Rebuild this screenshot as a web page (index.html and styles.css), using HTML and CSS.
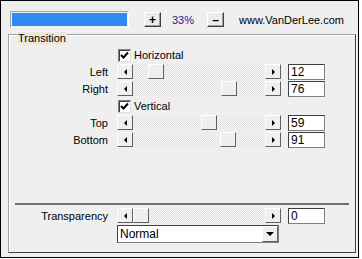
FILE: index.html
```html
<!DOCTYPE html>
<html>
<head>
<meta charset="utf-8">
<link rel="stylesheet" href="styles.css">
</head>
<body>
<div class="frame">
  <div class="top">
    <div class="progress"><div class="fill"></div></div>
    <div class="btn plus">+</div>
    <span class="pct">33%</span>
    <div class="btn minus">–</div>
    <span class="url">www.VanDerLee.com</span>
  </div>
  <div class="group">
    <span class="legend">Transition</span>
    <div class="check"><span class="box"><svg width="9" height="9" viewBox="0 0 9 9"><path d="M1 4 L3.5 6.5 L8 1.5" fill="none" stroke="#000" stroke-width="2"/></svg></span>Horizontal</div>
    <div class="row"><span class="lbl">Left</span><div class="slider"><div class="arr"><i class="tl"></i></div><div class="track"><div class="thumb" style="margin-left:15px"></div></div><div class="arr"><i class="tr"></i></div></div><div class="num">12</div></div>
    <div class="row"><span class="lbl">Right</span><div class="slider"><div class="arr"><i class="tl"></i></div><div class="track"><div class="thumb" style="margin-left:88px"></div></div><div class="arr"><i class="tr"></i></div></div><div class="num">76</div></div>
    <div class="check"><span class="box"><svg width="9" height="9" viewBox="0 0 9 9"><path d="M1 4 L3.5 6.5 L8 1.5" fill="none" stroke="#000" stroke-width="2"/></svg></span>Vertical</div>
    <div class="row"><span class="lbl">Top</span><div class="slider"><div class="arr"><i class="tl"></i></div><div class="track"><div class="thumb" style="margin-left:68px"></div></div><div class="arr"><i class="tr"></i></div></div><div class="num">59</div></div>
    <div class="row"><span class="lbl">Bottom</span><div class="slider"><div class="arr"><i class="tl"></i></div><div class="track"><div class="thumb" style="margin-left:87px"></div></div><div class="arr"><i class="tr"></i></div></div><div class="num">91</div></div>
    <div class="sep"></div>
    <div class="row"><span class="lbl">Transparency</span><div class="slider"><div class="arr"><i class="tl"></i></div><div class="track"><div class="thumb" style="margin-left:0"></div></div><div class="arr"><i class="tr"></i></div></div><div class="num">0</div></div>
    <div class="row sel-row"><span class="lbl"></span><div class="select"><span class="sel-text">Normal</span><div class="arr drop"><i class="td"></i></div></div></div>
  </div>
</div>
</body>
</html>
```

FILE: styles.css
```css
* { box-sizing: border-box; }
html, body { margin: 0; padding: 0; background: #ffffff; }
body { font-family: "Liberation Sans", Arial, sans-serif; font-size: 11px; color: #000; }
.frame {
  width: 359px; height: 258px;
  border: 1px solid #000;
  background: #efefef;
  padding: 10px 0 0 6px;
  display: flex; flex-direction: column;
}
.top { display: flex; align-items: center; height: 17px; }
.progress {
  width: 119px; height: 17px;
  border: 1px solid; border-color: #a0a0a0 #fff #fff #a0a0a0;
  padding: 1px;
  margin-left: 3px;
}
.fill { width: 100%; height: 100%; background: #2e8cf0; }
.btn {
  width: 17px; height: 15px;
  background: #ececec;
  border: 1px solid; border-color: #fff #404040 #404040 #fff;
  box-shadow: inset -1px -1px 0 #a0a0a0;
  display: flex; align-items: center; justify-content: center;
  font-weight: bold; font-size: 12px; line-height: 1;
}
.plus { margin-left: 15px; }
.pct { margin-left: 11px; color: #20208f; width: 35px; font-size: 11px; }
.minus { margin-left: 0; }
.url { margin-left: 15px; }
.group {
  position: relative;
  margin-top: 6px;
  width: 348px; height: 219px;
  margin-left: 1px;
  border: 1px solid; border-color: #a0a0a0 #404040 #404040 #a0a0a0;
  box-shadow: inset 1px 1px 0 #fff;
  padding: 12px 0 0 0;
  display: flex; flex-direction: column;
}
.legend {
  position: absolute; left: 8px; top: -3px;
  background: #ece9dc; padding: 0 1px; line-height: 13px; font-size: 11px;
}
.check { display: flex; align-items: center; height: 14px; margin: 1px 0 2px 109px; }
.box {
  width: 13px; height: 13px; background: #fff;
  border: 1px solid; border-color: #808080 #e0e0e0 #e0e0e0 #808080;
  box-shadow: inset 1px 1px 0 #404040;
  display: flex; align-items: center; justify-content: center;
  margin-right: 3px;
}
.row { display: flex; align-items: center; height: 15px; margin-bottom: 2px; }
.lbl { width: 99px; text-align: right; margin-right: 9px; }
.slider { display: flex; width: 164px; height: 15px; }
.arr {
  width: 16px; height: 15px; flex: none;
  background: #efefef;
  border: 1px solid; border-color: #fff #606060 #606060 #fff;
  display: flex; align-items: center; justify-content: center;
}
.track {
  flex: 1; height: 15px;
  background: repeating-conic-gradient(#f6f6f6 0 25%, #e2e2e2 0 50%) 0 0 / 2px 2px;
  display: flex;
}
.thumb {
  width: 16px; height: 15px;
  background: #efefef;
  border: 1px solid; border-color: #fff #606060 #606060 #fff;
}
.tl { width: 0; height: 0; border-top: 3px solid transparent; border-bottom: 3px solid transparent; border-right: 3px solid #000; }
.tr { width: 0; height: 0; border-top: 3px solid transparent; border-bottom: 3px solid transparent; border-left: 3px solid #000; }
.td { width: 0; height: 0; border-left: 4px solid transparent; border-right: 4px solid transparent; border-top: 4px solid #000; }
.num {
  margin-left: 7px; width: 37px; height: 16px; background: #fff;
  border: 1px solid; border-color: #404040 #808080 #808080 #404040;
  padding-left: 2px; line-height: 14px; font-size: 12px;
}
.sep { height: 2px; background: #707070; margin: 54px 6px 3px 6px; }
.sel-row { height: 18px; }
.select {
  width: 162px; height: 18px; background: #fff;
  border: 1px solid; border-color: #404040 #808080 #808080 #404040;
  display: flex; align-items: center; justify-content: space-between;
  padding-left: 2px; font-size: 12px;
}
.drop { height: 16px; }
```
